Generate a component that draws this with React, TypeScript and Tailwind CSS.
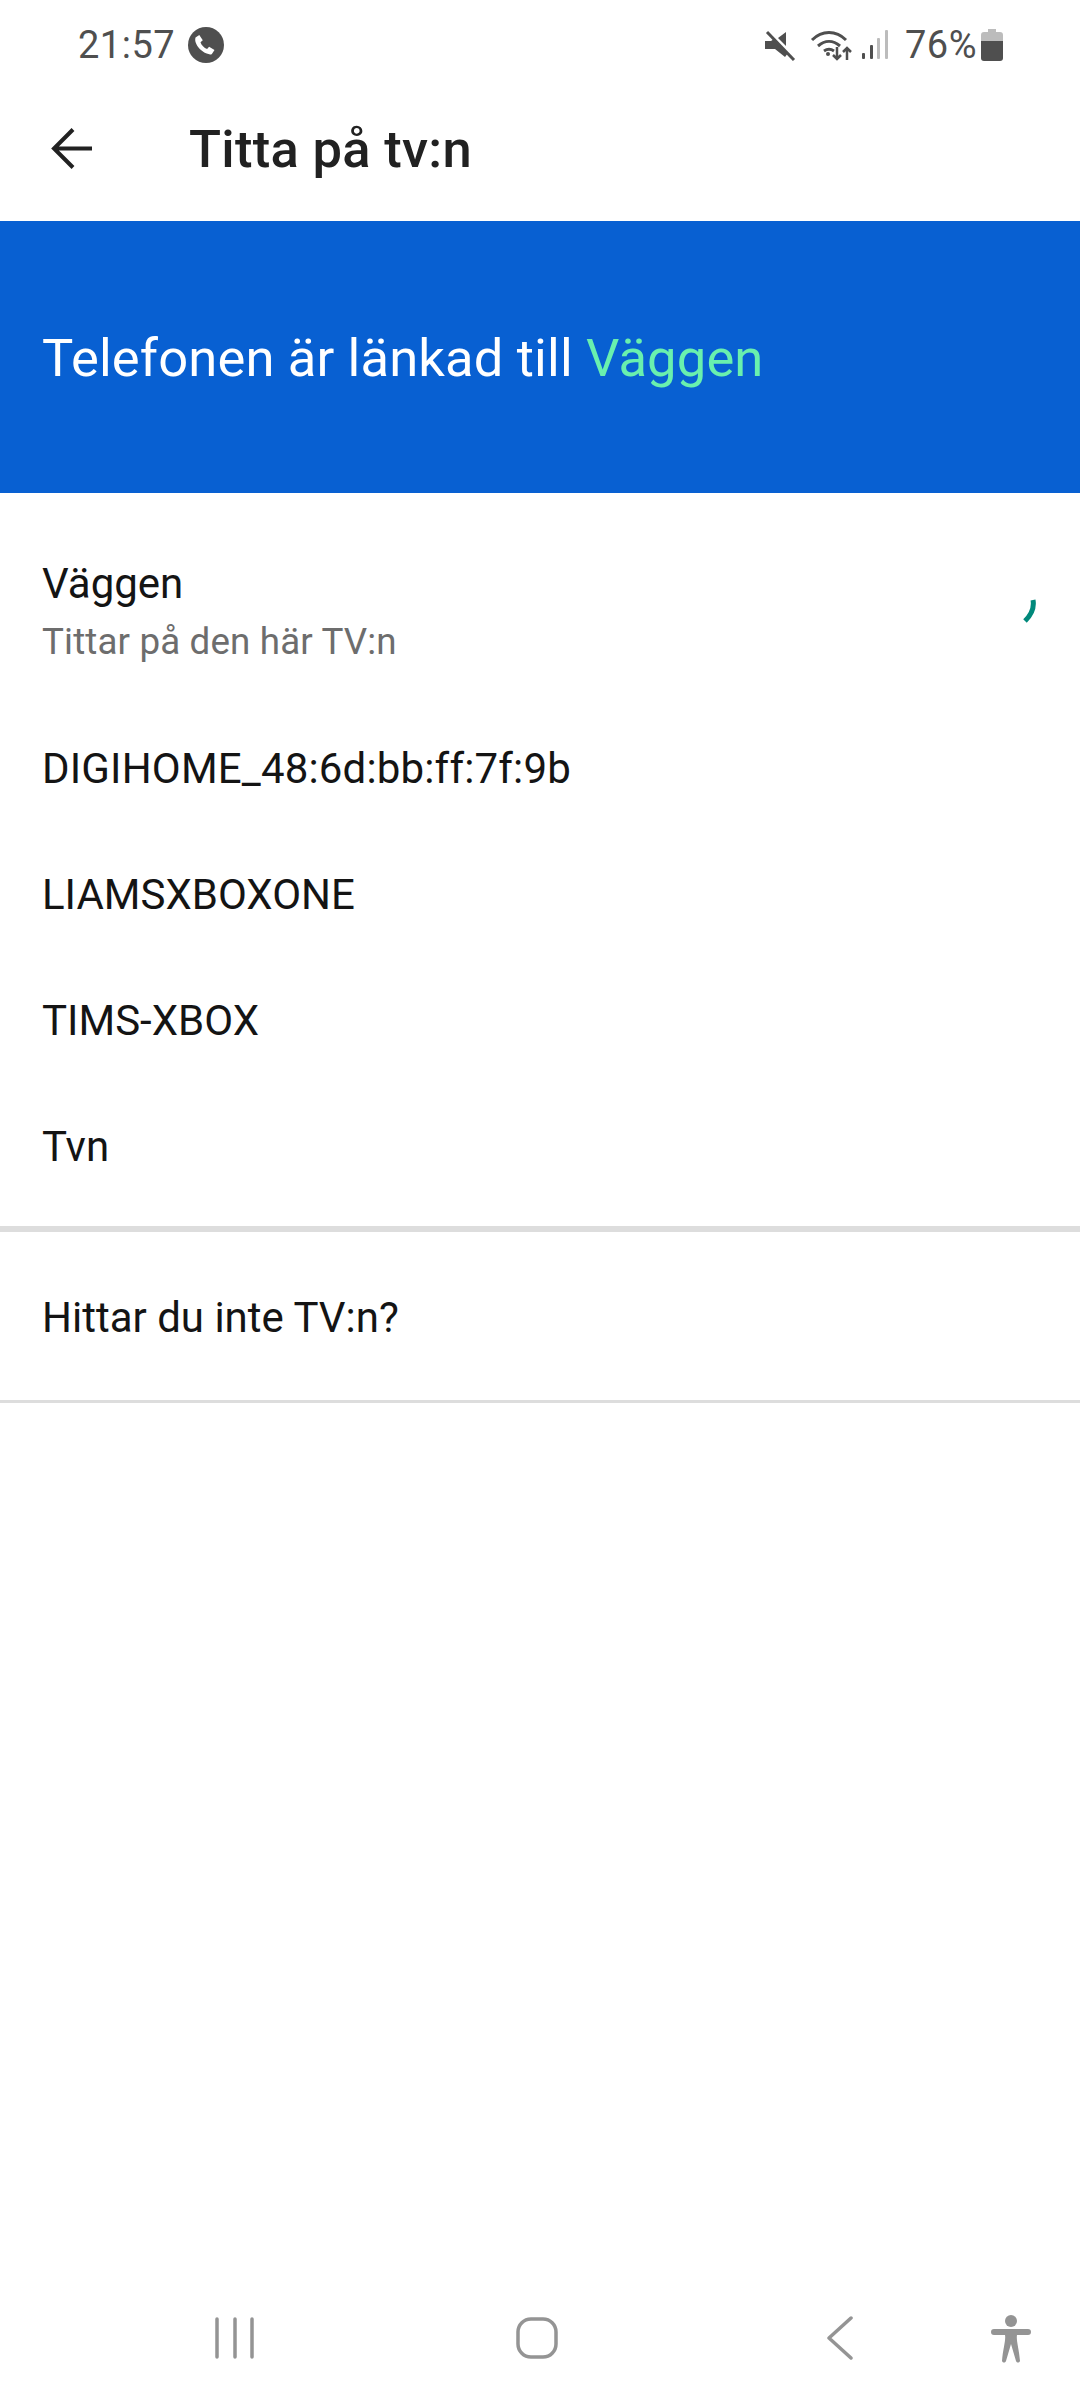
const font = { fontFamily: 'Roboto, sans-serif' };

function Row({ label, wide }: { label: string; wide?: boolean }) {
  return (
    <div className={wide ? "h-[126px] flex items-center pl-[42px] pt-[2px] text-[42px] tracking-[0.17px] text-[#141414]" : "h-[126px] flex items-center pl-[42px] pt-[2px] text-[42px] text-[#141414]"}>{label}</div>
  );
}

export default function App() {
  return (
    <div style={font} className="w-[1080px] h-[2400px] bg-white flex flex-col overflow-hidden">
      <div className="h-[90px] shrink-0 pl-[78px] pr-[77px] flex items-center justify-between text-[#4f4f4f]">
        <div className="flex items-center gap-[13px]">
          <span className="text-[38px] leading-none tracking-[0.5px]">21:57</span>
          <svg width="36" height="36" viewBox="0 0 36 36">
            <circle cx="18" cy="18" r="18" fill="#4f4f4f" />
            <path d="M7.500 10.500l3.800-2.600 3.500 5.400-2.300 2c.9 2.900 3.600 5.700 6.600 6.700l2-2.300 5.400 3.400-2.600 3.800c-1 .9-3.200.6-5.200-.3-5.300-2.300-9.300-6.300-11-11.100-.6-1.800-.6-3.100-.2-5z" fill="#fff" />
          </svg>
        </div>
        <div className="flex items-center">
          <svg width="32" height="32" viewBox="0 0 32 32" className="mr-[14px]">
            <path d="M1 12h6l3-2 14 14-3 4-10-8H1zM22 3v14L14 9z" fill="#4f4f4f" />
            <path d="M3 3l27 28" stroke="#4f4f4f" strokeWidth="3" />
          </svg>
          <svg width="44" height="32" viewBox="0 0 44 32" className="mr-[7px]">
            <path d="M2 11c10-10 24-10 34 0M8 17c7-6 15-6 22 0M14 22c3-2 7-2 10 0" fill="none" stroke="#4f4f4f" strokeWidth="3" />
            <circle cx="18" cy="25" r="2" fill="#4f4f4f" />
            <path d="M27 18v12M23 26l4 4 4-4M37 31V19M33 23l4-4 4 4" fill="none" stroke="#4f4f4f" strokeWidth="2.500" />
          </svg>
          <svg width="28" height="32" viewBox="0 0 28 32" className="mr-[16px]">
            <rect x="1" y="24" width="3" height="6" rx="1" fill="#4f4f4f" />
            <rect x="9" y="16" width="3" height="14" rx="1" fill="#4f4f4f" />
            <rect x="16" y="9" width="3" height="21" rx="1" fill="#bcbcbc" />
            <rect x="24" y="1" width="3" height="29" rx="1" fill="#bcbcbc" />
          </svg>
          <span className="text-[38px] leading-none tracking-[0.5px]">76%</span>
          <svg width="22" height="32" viewBox="0 0 22 32" className="ml-[4px]">
            <path d="M7 0h8v3h4a3 3 0 0 1 3 3v6H0V6a3 3 0 0 1 3-3h4z" fill="#bcbcbc" />
            <path d="M0 12h22v17a3 3 0 0 1-3 3H3a3 3 0 0 1-3-3z" fill="#4f4f4f" />
          </svg>
        </div>
      </div>

      <div className="h-[131px] shrink-0 flex items-center pb-[12px]">
        <svg width="44" height="44" viewBox="0 0 44 44" className="ml-[50px]">
          <path d="M42 20.500H5M23 1.500L4 20.500l19 19" fill="none" stroke="#212121" strokeWidth="4" />
        </svg>
        <span className="ml-[95px] text-[52.500px] font-medium text-[#212121] tracking-[0.3px]">Titta på tv:n</span>
      </div>

      <div className="h-[272px] shrink-0 bg-[#0860d2] flex items-center pl-[42px] pt-[2px] text-[52.500px] tracking-[0.15px] text-white">
        <span>Telefonen är länkad till <span className="text-[#69f0ae]">Väggen</span></span>
      </div>

      <div className="h-[211px] shrink-0 relative pl-[42px] pt-[62px]">
        <div className="text-[42px] leading-[58px] text-[#141414]">Väggen</div>
        <div className="text-[36.750px] leading-[46px] tracking-[0.14px] text-[#6d6d6d] mt-[6px]">Tittar på den här TV:n</div>
        <svg width="16" height="26" viewBox="0 0 16 26" className="absolute left-[1021px] top-[106px]">
          <path d="M12 1c1.500 8-1 14-8 21" fill="none" stroke="#00897b" strokeWidth="5" />
        </svg>
      </div>

      <Row label="DIGIHOME_48:6d:bb:ff:7f:9b" wide />
      <Row label="LIAMSXBOXONE" />
      <Row label="TIMS-XBOX" />
      <Row label="Tvn" />

      <div className="mt-[18px] h-[6px] shrink-0 bg-[#dddddd]" />
      <div className="h-[168px] shrink-0 flex items-center pl-[42px] pt-[2px] text-[42px] text-[#141414]">Hittar du inte TV:n?</div>
      <div className="h-[3px] shrink-0 bg-[#dddddd]" />

      <div className="flex-1" />

      <div className="h-[120px] shrink-0 relative">
        <svg width="40" height="42" viewBox="0 0 40 42" className="absolute left-[215px] top-[37px]">
          <path d="M2 2v38M20 2v38M37 2v38" fill="none" stroke="#949494" strokeWidth="3.500" strokeLinecap="round" />
        </svg>
        <svg width="42" height="42" viewBox="0 0 42 42" className="absolute left-[516px] top-[37px]">
          <rect x="2" y="2" width="38" height="38" rx="13" fill="none" stroke="#949494" strokeWidth="3.500" />
        </svg>
        <svg width="28" height="44" viewBox="0 0 28 44" className="absolute left-[826px] top-[36px]">
          <path d="M25 2L3 22l0 0 22 20" fill="none" stroke="#949494" strokeWidth="3.500" strokeLinecap="round" strokeLinejoin="round" />
        </svg>
        <svg width="40" height="48" viewBox="0 0 40 48" className="absolute left-[991px] top-[35px]">
          <ellipse cx="20" cy="6" rx="6" ry="6" fill="#949494" />
          <path d="M3 14h34a2 2 0 0 1 0 6H26c-1 5 2 14 3 26-1 2-3 2-4 0l-5-17-5 17c-1 2-3 2-4 0 1-12 4-21 3-26H3a2 2 0 0 1 0-6z" fill="#949494" />
        </svg>
      </div>
    </div>
  );
}
